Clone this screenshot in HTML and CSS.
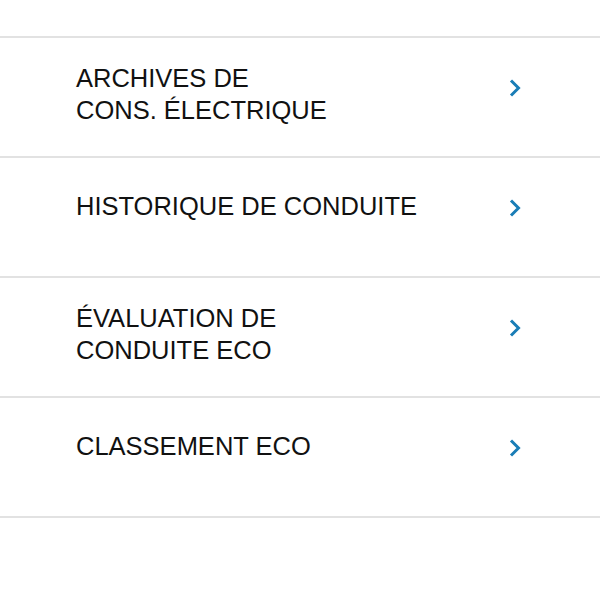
FILE: index.html
```html
<!DOCTYPE html>
<html lang="fr">
<head>
<meta charset="utf-8">
<link rel="stylesheet" href="styles.css">
</head>
<body>
<ul class="menu">
  <li class="row">
    <span class="label">ARCHIVES DE<br>CONS. ÉLECTRIQUE</span>
    <svg class="chev" viewBox="0 0 14 20" width="14" height="20"><polyline points="3,2.5 10.5,10 3,17.5"/></svg>
  </li>
  <li class="row">
    <span class="label">HISTORIQUE DE CONDUITE</span>
    <svg class="chev" viewBox="0 0 14 20" width="14" height="20"><polyline points="3,2.5 10.5,10 3,17.5"/></svg>
  </li>
  <li class="row">
    <span class="label">ÉVALUATION DE<br>CONDUITE ECO</span>
    <svg class="chev" viewBox="0 0 14 20" width="14" height="20"><polyline points="3,2.5 10.5,10 3,17.5"/></svg>
  </li>
  <li class="row">
    <span class="label">CLASSEMENT ECO</span>
    <svg class="chev" viewBox="0 0 14 20" width="14" height="20"><polyline points="3,2.5 10.5,10 3,17.5"/></svg>
  </li>
</ul>
</body>
</html>
```
FILE: styles.css
```css
html, body {
  margin: 0;
  padding: 0;
  background: #fff;
}
body {
  font-family: "Liberation Sans", Arial, sans-serif;
  color: #111;
}
.menu {
  list-style: none;
  margin: 36px 0 0 0;
  padding: 0;
  border-top: 2px solid #e2e2e2;
}
.row {
  height: 118px;
  border-bottom: 2px solid #e2e2e2;
  display: flex;
  align-items: flex-start;
  box-sizing: content-box;
}
.label {
  margin-top: 24px;
  margin-left: 76px;
  min-height: 48px;
  display: flex;
  align-items: center;
  font-size: 25.5px;
  line-height: 32px;
  width: 430px;
}
.chev {
  margin-top: 40px;
  margin-left: 2px;
  fill: none;
  stroke: #1a7db6;
  stroke-width: 3;
  stroke-linejoin: miter;
}
```
